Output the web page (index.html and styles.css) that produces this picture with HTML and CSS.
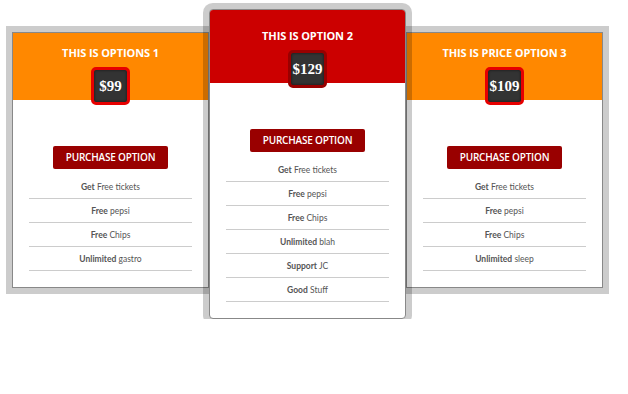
FILE: index.html
```html
<!DOCTYPE html>
<html>
<head>
<meta charset="utf-8">
<link rel="stylesheet" href="styles.css">
</head>
<body>
<div class="pricing">
  <div class="plan">
    <div class="plan-head">
      <h2 class="plan-title">THIS IS OPTIONS 1</h2>
      <div class="price">$99</div>
    </div>
    <div class="plan-body">
      <a class="buy">PURCHASE OPTION</a>
      <ul class="features">
        <li><b>Get</b> Free tickets</li>
        <li><b>Free</b> pepsi</li>
        <li><b>Free</b> Chips</li>
        <li><b>Unlimited</b> gastro</li>
      </ul>
    </div>
  </div>
  <div class="plan featured">
    <div class="plan-head">
      <h2 class="plan-title">THIS IS OPTION 2</h2>
      <div class="price">$129</div>
    </div>
    <div class="plan-body">
      <a class="buy">PURCHASE OPTION</a>
      <ul class="features">
        <li><b>Get</b> Free tickets</li>
        <li><b>Free</b> pepsi</li>
        <li><b>Free</b> Chips</li>
        <li><b>Unlimited</b> blah</li>
        <li><b>Support</b> JC</li>
        <li><b>Good</b> Stuff</li>
      </ul>
    </div>
  </div>
  <div class="plan">
    <div class="plan-head">
      <h2 class="plan-title">THIS IS PRICE OPTION 3</h2>
      <div class="price">$109</div>
    </div>
    <div class="plan-body">
      <a class="buy">PURCHASE OPTION</a>
      <ul class="features">
        <li><b>Get</b> Free tickets</li>
        <li><b>Free</b> pepsi</li>
        <li><b>Free</b> Chips</li>
        <li><b>Unlimited</b> sleep</li>
      </ul>
    </div>
  </div>
</div>
</body>
</html>
```
FILE: styles.css
```css
html, body {
  margin: 0;
  padding: 0;
  background: #fff;
}
body {
  font-family: "Open Sans", "Liberation Sans", sans-serif;
}
.pricing {
  display: flex;
  align-items: flex-start;
  padding: 32px 0 0 12px;
}
.plan {
  width: 197px;
  box-sizing: border-box;
  border: 1px solid #888;
  background: #fff;
  box-shadow: 0 0 0 6px rgba(0, 0, 0, 0.2);
  position: relative;
  z-index: 1;
}
.plan.featured {
  margin-top: -23px;
  border-radius: 4px;
  z-index: 2;
}
.plan-head {
  background: #ff8800;
  padding-top: 13px;
  display: flex;
  flex-direction: column;
  align-items: center;
}
.featured .plan-head {
  background: #cc0000;
  padding-top: 19px;
  border-radius: 3px 3px 0 0;
}
.plan-title {
  margin: 0;
  color: #fff;
  font-size: 11px;
  font-weight: 700;
  line-height: 14px;
  letter-spacing: -0.1px;
}
.price {
  margin: 7px 0 -5px;
  width: 39px;
  height: 38px;
  box-sizing: border-box;
  border: 3px solid #e60000;
  border-radius: 5px;
  background: #333;
  box-shadow: inset 0 0 3px rgba(0, 0, 0, 0.6);
  color: #fff;
  font-family: "Liberation Serif", "DejaVu Serif", serif;
  font-weight: 700;
  font-size: 15px;
  line-height: 32px;
  text-align: center;
  position: relative;
  z-index: 1;
}
.featured .price {
  border-color: #990000;
}
.plan-body {
  padding: 46px 16px 16px;
  display: flex;
  flex-direction: column;
  align-items: center;
}
.buy {
  display: block;
  width: 115px;
  height: 23px;
  box-sizing: border-box;
  background: #990000;
  border-radius: 2px;
  color: #fff;
  font-family: "Open Sans", "Liberation Sans", sans-serif;
  font-weight: 600;
  font-size: 10px;
  letter-spacing: -0.2px;
  line-height: 23px;
  text-align: center;
}
.features {
  list-style: none;
  margin: 6px 0 0;
  padding: 0;
  width: 100%;
}
.features li {
  height: 23px;
  line-height: 24px;
  border-bottom: 1px solid #ccc;
  text-align: center;
  font-family: Lato, "Open Sans", sans-serif;
  font-size: 8.5px;
  color: #555;
}
.features b {
  font-weight: 700;
  color: #555;
}
```
